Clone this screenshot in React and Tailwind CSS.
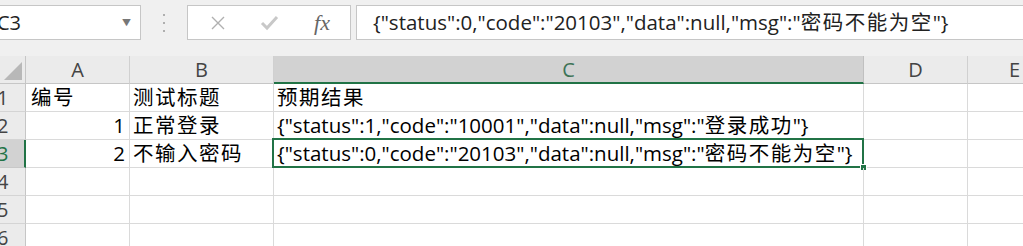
import React from "react";

const font = { fontFamily: '"Open Sans", "Noto Sans CJK SC", sans-serif' };

function T({ s }) {
  // render latin with normal spacing and CJK with slight tracking
  const parts = s.split(/([\u4e00-\u9fff]+)/);
  return (
    <>
      {parts.map((p, i) =>
        /[\u4e00-\u9fff]/.test(p) ? (
          <span key={i} className="tracking-[1.5px]">
            {p}
          </span>
        ) : (
          <span key={i}>{p}</span>
        )
      )}
    </>
  );
}

function RowHead({ n, active }) {
  return (
    <div
      className={`w-[26px] h-[28px] shrink-0 flex items-center overflow-hidden border-b ${
        active
          ? "bg-[#d2d2d2] text-[#217346] border-r-2 border-r-[#217346] border-b-[#c8c8c8]"
          : "bg-[#ebebeb] text-[#444] border-r border-r-[#c6c6c6] border-b-[#d4d4d4]"
      }`}
    >
      <span className="-ml-[3px] text-[20px] leading-none">{n}</span>
    </div>
  );
}

function Cell({ w, children, right, pad, last }) {
  return (
    <div
      className={`${w} h-[28px] shrink-0 flex items-center border-b border-b-[#dadada] ${
        last ? "" : "border-r border-r-[#dadada]"
      } ${right ? "justify-end pr-[4px]" : pad} text-[20.5px] leading-none text-black whitespace-nowrap`}
    >
      {children}
    </div>
  );
}

function Row({ n, a, aRight, b, c, active }) {
  return (
    <div className="flex">
      <RowHead n={n} active={active} />
      <Cell w="w-[104px]" right={aRight} pad="pl-[5px]">
        {a && <T s={a} />}
      </Cell>
      <Cell w="w-[144px]" pad="pl-[3px]">
        {b && <T s={b} />}
      </Cell>
      <div className="w-[590px] h-[28px] shrink-0 relative flex items-center pl-[3px] border-b border-r border-[#dadada] text-[20.5px] leading-none text-black whitespace-nowrap">
        {c && <T s={c} />}
        {active && (
          <>
            <div className="absolute -left-[2px] -top-[2px] -right-[1px] -bottom-[1px] border-2 border-[#217346]" />
            <div className="absolute -right-[4px] -bottom-[4px] w-[7px] h-[7px] bg-[#217346] border border-white" />
          </>
        )}
      </div>
      <Cell w="w-[104px]" pad=""></Cell>
      <Cell w="w-[60px]" pad="" last></Cell>
    </div>
  );
}

export default function App() {
  return (
    <div className="w-[1023px] h-[246px] overflow-hidden bg-white" style={font}>
      {/* toolbar */}
      <div className="h-[56px] bg-[#f0f0f0] flex items-start pt-[5px]">
        <div className="w-[141px] h-[35px] bg-white border border-l-0 border-[#c6c6c6] flex items-center justify-between pr-[9px]">
          <span className="-ml-[3px] text-[20px] text-[#222] leading-none">C3</span>
          <span className="text-[#777] text-[9px] leading-none">▼</span>
        </div>
        <div className="w-[46px] h-[35px] flex flex-col items-center justify-center gap-[6px]">
          <span className="w-[2px] h-[2px] bg-[#9a9a9a] rounded-full" />
          <span className="w-[2px] h-[2px] bg-[#9a9a9a] rounded-full" />
          <span className="w-[2px] h-[2px] bg-[#9a9a9a] rounded-full" />
        </div>
        <div className="w-[164px] h-[35px] bg-white border border-[#c6c6c6] flex items-center">
          <div className="w-[58px] flex justify-center pl-[2px]">
            <svg width="16" height="16" viewBox="0 0 16 16">
              <path d="M2 2 L14 14 M14 2 L2 14" stroke="#b0b0b0" strokeWidth="1.4" fill="none" />
            </svg>
          </div>
          <div className="w-[46px] flex justify-center">
            <svg width="19" height="17" viewBox="0 0 19 17">
              <path d="M2 9 L7 14 L17 3" stroke="#c8c8c8" strokeWidth="3" fill="none" />
            </svg>
          </div>
          <div className="flex-1 flex justify-center pl-[2px]">
            <span
              className="italic text-[#666] text-[22px] leading-none"
              style={{ fontFamily: '"Liberation Serif", "DejaVu Serif", serif' }}
            >
              fx
            </span>
          </div>
        </div>
        <div className="w-[5px]" />
        <div className="flex-1 h-[35px] bg-white border border-r-0 border-[#c6c6c6] flex items-center pl-[16px] text-[20.5px] leading-none text-[#222] whitespace-nowrap">
          <T s={'{"status":0,"code":"20103","data":null,"msg":"密码不能为空"}'} />
        </div>
      </div>

      {/* column headers */}
      <div className="flex h-[28px]">
        <div className="w-[26px] h-[28px] shrink-0 bg-[#ebebeb] border-r border-b border-[#c6c6c6] relative overflow-hidden">
          <svg className="absolute left-[4px] top-[6px]" width="18" height="18" viewBox="0 0 18 18">
            <path d="M18 0 L18 18 L0 18 Z" fill="#b8b8b8" />
          </svg>
        </div>
        <div className="w-[104px] shrink-0 bg-[#ebebeb] border-r border-b border-r-[#d0d0d0] border-b-[#c6c6c6] flex items-center justify-center text-[20px] text-[#444] leading-none">
          A
        </div>
        <div className="w-[144px] shrink-0 bg-[#ebebeb] border-r border-b border-r-[#d0d0d0] border-b-[#c6c6c6] flex items-center justify-center text-[20px] text-[#444] leading-none">
          B
        </div>
        <div className="w-[590px] shrink-0 bg-[#d2d2d2] border-r border-r-[#c0c0c0] border-b-2 border-b-[#217346] flex items-center justify-center text-[20px] text-[#3d7356] leading-none pt-[1px]">
          C
        </div>
        <div className="w-[104px] shrink-0 bg-[#ebebeb] border-r border-b border-r-[#d0d0d0] border-b-[#c6c6c6] flex items-center justify-center text-[20px] text-[#444] leading-none">
          D
        </div>
        <div className="w-[60px] shrink-0 bg-[#ebebeb] border-b border-b-[#c6c6c6] flex items-center pl-[41px] text-[20px] text-[#444] leading-none">
          E
        </div>
      </div>

      <Row n="1" a="编号" b="测试标题" c="预期结果" />
      <Row n="2" a="1" aRight b="正常登录" c={'{"status":1,"code":"10001","data":null,"msg":"登录成功"}'} />
      <Row n="3" a="2" aRight b="不输入密码" c={'{"status":0,"code":"20103","data":null,"msg":"密码不能为空"}'} active />
      <Row n="4" />
      <Row n="5" />
      <Row n="6" />
    </div>
  );
}
